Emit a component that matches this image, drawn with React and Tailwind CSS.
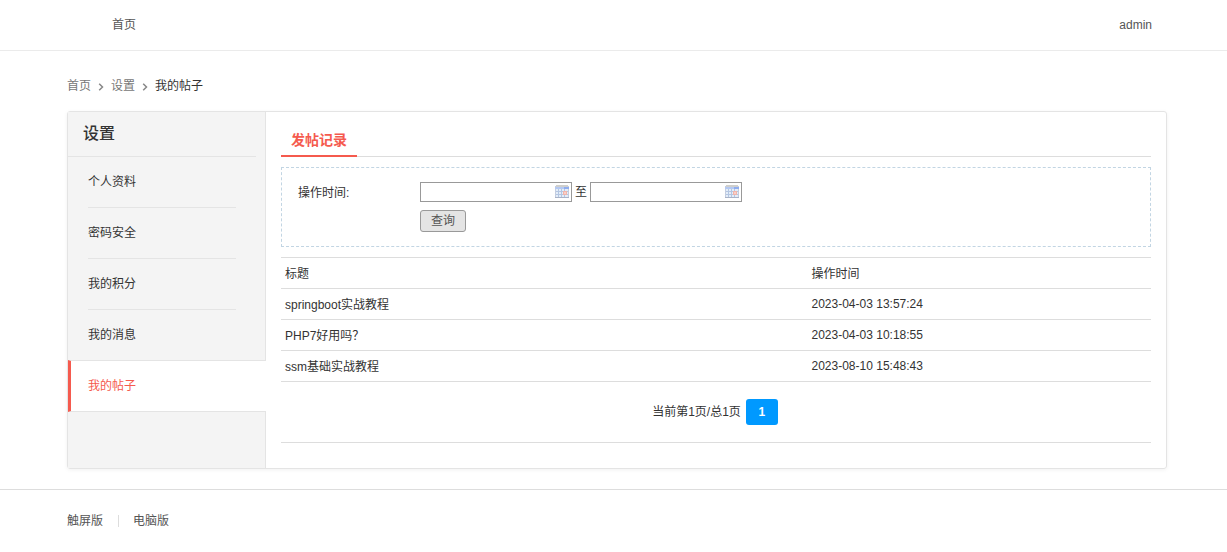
import React, { useState } from 'react';
import clsx from 'clsx';

const MENU = ['个人资料', '密码安全', '我的积分', '我的消息', '我的帖子'];

const POSTS = [
    { title: 'springboot实战教程', time: '2023-04-03 13:57:24' },
    { title: 'PHP7好用吗？', time: '2023-04-03 10:18:55' },
    { title: 'ssm基础实战教程', time: '2023-08-10 15:48:43' },
];

function Chevron() {
    return (
        <svg className="mx-[7px] mt-[2px] w-[6px] h-[8px]" viewBox="0 0 6 8" fill="none" stroke="#888" strokeWidth="1.5">
            <path d="M1.2 0.7L4.5 4L1.2 7.3" />
        </svg>
    );
}

function CalendarIcon() {
    return (
        <svg className="-mt-px w-[14px] h-[13px]" viewBox="0 0 14 13" shapeRendering="crispEdges">
            <rect x="0" y="1" width="14" height="12" fill="#c3cde0" />
            <rect x="1" y="0" width="12" height="2" fill="#cfcfcd" />
            <rect x="0" y="2" width="14" height="2" fill="#b4c9f3" />
            <rect x="9" y="2" width="5" height="2" fill="#8eadf0" />
            <rect x="1" y="4" width="12" height="8" fill="#e4edf8" />
            <path d="M1 6.5H13M1 9.5H13M3.5 4V12M6.5 4V12M9.5 4V12" stroke="#b4c6e2" strokeWidth="1" />
            <rect x="8" y="6" width="4" height="4" fill="#f3b5aa" />
            <rect x="9" y="7" width="2" height="2" fill="#f8d0c8" />
            <rect x="0" y="12" width="14" height="1" fill="#a9b3c8" />
        </svg>
    );
}

function DateInput() {
    const [value, setValue] = useState('');

    return (
        <div className="flex items-center w-[152px] h-5 pr-[2px] bg-white border border-[#999]">
            <input
                type="text"
                value={value}
                onChange={(e) => setValue(e.target.value)}
                className="flex-1 min-w-0 h-full px-1 outline-none"
            />
            <CalendarIcon />
        </div>
    );
}

function Sidebar({ active, onSelect }) {
    return (
        <div className="w-[198px] shrink-0 bg-[#f4f4f4] border-r border-[#e4e4e4]">
            <h2 className="mr-[9px] h-[45px] pl-[15px] text-base leading-[43px] font-medium text-[#333] border-b border-[#e4e4e4]">设置</h2>
            <ul>
                {MENU.map((item, idx) => (
                    <li
                        key={item}
                        onClick={() => onSelect(item)}
                        className={clsx(
                            'cursor-pointer',
                            item === active
                                ? 'relative -mt-px -mr-px h-[52px] pl-[17px] leading-[50px] bg-white border-l-[3px] border-l-[#f55a4e] border-y border-y-[#e4e4e4] text-[#f55a4e]'
                                : 'ml-5 mr-[29px] h-[51px] leading-[50px] border-b',
                            item !== active && (idx === 3 ? 'border-transparent' : 'border-[#e4e4e4]')
                        )}
                    >
                        {item}
                    </li>
                ))}
            </ul>
        </div>
    );
}

export default function App() {
    const [active, setActive] = useState('我的帖子');

    return (
        <div className="min-h-screen bg-white text-xs text-[#333] font-['Liberation_Sans','Noto_Sans_CJK_SC',sans-serif]">
            <header className="h-[51px] border-b border-[#ebebeb]">
                <div className="flex justify-between pl-28 pr-[75px] leading-[50px] text-[#555]">
                    <a href="#">首页</a>
                    <a href="#">admin</a>
                </div>
            </header>

            <div className="ml-[67px] w-[1100px]">
                <nav className="flex items-center h-[60px] pt-[10px] text-[#777]">
                    <a href="#">首页</a>
                    <Chevron />
                    <a href="#">设置</a>
                    <Chevron />
                    <span className="text-[#333]">我的帖子</span>
                </nav>

                <div className="flex h-[358px] border border-[#e4e4e4] rounded-[3px] shadow-[0_1px_4px_rgba(0,0,0,0.06)]">
                    <Sidebar active={active} onSelect={setActive} />

                    <div className="flex-1 pl-[15px] pr-[15px]">
                        <div className="h-[45px] border-b border-[#ddd]">
                            <h3 className="w-[76px] h-[45px] pt-[12px] text-center text-sm leading-[32px] font-bold text-[#f55a4e] border-b-2 border-[#f55a4e]">发帖记录</h3>
                        </div>

                        {/* Search form */}
                        <form onSubmit={(e) => e.preventDefault()} className="mt-[10px] h-20 flex pl-4 pt-[14px] border border-dashed border-[#c2d5e3]">
                            <label className="w-[122px] leading-[22px]">操作时间:</label>
                            <div>
                                <div className="flex items-center gap-[3px] h-5">
                                    <DateInput />
                                    <span>至</span>
                                    <DateInput />
                                </div>
                                <button className="mt-2 w-[46px] h-[22px] leading-5 text-[#555] bg-[#e4e4e4] border border-[#999] rounded-[3px]">查询</button>
                            </div>
                        </form>

                        <table className="mt-[10px] w-full border-collapse table-fixed">
                            <thead>
                                <tr className="h-[31px] text-left border-y border-[#ddd]">
                                    <th className="w-[526px] px-1 pt-[2px] pb-0 font-normal">标题</th>
                                    <th className="pl-[4.5px] pr-1 pt-[2px] pb-0 font-normal">操作时间</th>
                                </tr>
                            </thead>
                            <tbody>
                                {POSTS.map((post) => (
                                    <tr key={post.title} className="h-[31px] border-b border-[#ddd]">
                                        <td className="px-1 pt-[2px] pb-0">{post.title}</td>
                                        <td className="pl-[4.5px] pr-1 py-0">{post.time}</td>
                                    </tr>
                                ))}
                            </tbody>
                        </table>

                        <div className="flex items-center justify-center h-[61px] pr-[2px] border-b border-[#ddd]">
                            <span>当前第1页/总1页</span>
                            <a href="#" className="ml-[5px] w-8 h-[26px] leading-[26px] text-center font-bold text-white bg-[#09f] rounded-[3px]">1</a>
                        </div>
                    </div>
                </div>
            </div>

            <footer className="mt-5 border-t border-[#ddd]">
                <div className="flex items-center ml-[67px] h-[62px] text-[#555]">
                    <a href="#">触屏版</a>
                    <span className="ml-[15px] mr-[14px] w-px h-3 bg-[#ddd]" />
                    <a href="#">电脑版</a>
                </div>
            </footer>
        </div>
    );
}
